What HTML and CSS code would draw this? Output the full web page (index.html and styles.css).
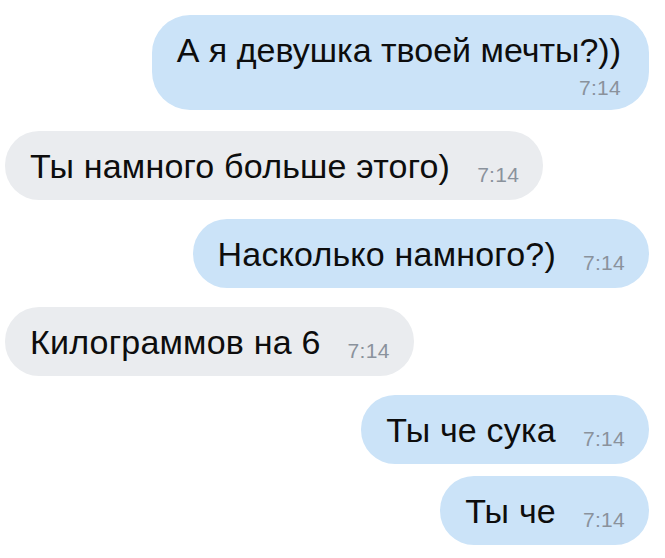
FILE: index.html
```html
<!DOCTYPE html>
<html lang="ru">
<head>
<meta charset="utf-8">
<link rel="stylesheet" href="styles.css">
</head>
<body>
<div class="chat">
  <div class="msg out tall">
    <span class="text">А я девушка твоей мечты?))</span>
    <span class="time">7:14</span>
  </div>
  <div class="msg in">
    <span class="text">Ты намного больше этого)</span>
    <span class="time">7:14</span>
  </div>
  <div class="msg out">
    <span class="text">Насколько намного?)</span>
    <span class="time">7:14</span>
  </div>
  <div class="msg in">
    <span class="text">Килограммов на 6</span>
    <span class="time">7:14</span>
  </div>
  <div class="msg out">
    <span class="text">Ты че сука</span>
    <span class="time">7:14</span>
  </div>
  <div class="msg out same">
    <span class="text">Ты че</span>
    <span class="time">7:14</span>
  </div>
</div>
</body>
</html>
```
FILE: styles.css
```css
html, body {
  margin: 0;
  padding: 0;
  background: #ffffff;
}
body {
  width: 665px;
  height: 558px;
  overflow: hidden;
  font-family: "Liberation Sans", Arial, sans-serif;
}
.chat {
  display: flex;
  flex-direction: column;
  padding: 15px 16px 0 5px;
  gap: 19px;
}
.msg {
  display: flex;
  align-items: flex-end;
  gap: 27px;
  padding: 15px 24px 14px 25px;
  border-radius: 34px;
}
.msg.out {
  align-self: flex-end;
  background: #cbe3f8;
}
.msg.in {
  align-self: flex-start;
  background: #eaecef;
}
.msg.same {
  margin-top: -7px;
}
.msg.tall {
  flex-direction: column;
  align-items: flex-end;
  gap: 7px;
  margin-bottom: 2px;
  padding: 15px 28px 11px 25px;
  border-radius: 38px;
}
.text {
  font-size: 34px;
  line-height: 40px;
  letter-spacing: 0.2px;
  color: #0d0d0d;
  white-space: nowrap;
}
.tall .text {
  letter-spacing: 0;
}
.time {
  font-size: 21px;
  line-height: 22px;
  letter-spacing: 0.3px;
  color: #8a929c;
  white-space: nowrap;
}
```
